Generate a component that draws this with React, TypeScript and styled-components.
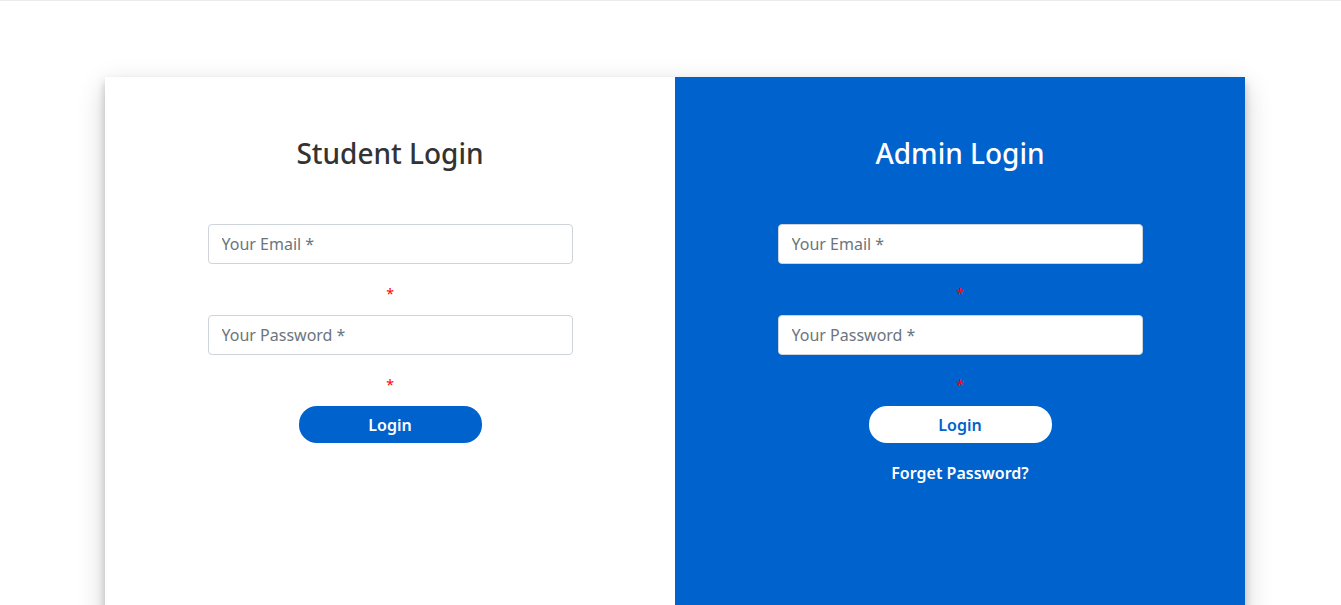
import React from "react";
import styled, { createGlobalStyle } from "styled-components";

const Global = createGlobalStyle`
  html, body { margin: 0; padding: 0; overflow: hidden; background: #fff; }
  body { font-family: "Noto Sans", "Open Sans", Arial, sans-serif; color: #212529; }
  * { box-sizing: border-box; }
`;

const TopRule = styled.div`
  height: 1px;
  background: #dcdcdc;
  border-bottom: 1px solid #ececec;
`;

const Page = styled.div`
  display: flex;
  justify-content: center;
  padding-left: 9px;
  padding-top: 76px;
`;

const Card = styled.div`
  width: 1140px;
  display: grid;
  grid-template-columns: 1fr 1fr;
  box-shadow: 0 5px 8px 0 rgba(0, 0, 0, 0.2), 0 9px 26px 0 rgba(0, 0, 0, 0.19);
`;

const Panel = styled.div<{ $dark?: boolean }>`
  background: ${(p) => (p.$dark ? "#0062cc" : "#fff")};
  min-height: 560px;
  display: flex;
  flex-direction: column;
  align-items: center;
  padding-top: 59px;
`;

const Title = styled.h3<{ $dark?: boolean }>`
  margin: 0 0 54px;
  font-size: 28px;
  line-height: 34px;
  font-weight: 500;
  color: ${(p) => (p.$dark ? "#fff" : "#333")};
`;

const Form = styled.form`
  width: 365px;
  display: flex;
  flex-direction: column;
  align-items: center;
`;

const Input = styled.input`
  width: 100%;
  height: 40px;
  padding: 0 13px;
  font-family: inherit;
  font-size: 16px;
  color: #495057;
  background: #fff;
  border: 1px solid #ced4da;
  border-radius: 4px;
  outline: none;
  &::placeholder { color: #6c757d; opacity: 1; }
`;

const Required = styled.span`
  height: 51px;
  padding-top: 8px;
  display: flex;
  align-items: center;
  justify-content: center;
  color: #ff0000;
  font-size: 14px;
  line-height: 1;
`;

const Submit = styled.button<{ $dark?: boolean }>`
  width: 183px;
  height: 37px;
  border: none;
  border-radius: 18px;
  font-family: inherit;
  font-size: 16px;
  font-weight: 600;
  cursor: pointer;
  color: ${(p) => (p.$dark ? "#0062cc" : "#fff")};
  background: ${(p) => (p.$dark ? "#fff" : "#0062cc")};
`;

const ForgetLink = styled.a`
  margin-top: 18px;
  color: #fff;
  font-size: 16px;
  line-height: 24px;
  font-weight: 600;
  text-decoration: none;
`;

function LoginForm({ dark, title }: { dark?: boolean; title: string }) {
  return (
    <Panel $dark={dark}>
      <Title $dark={dark}>{title}</Title>
      <Form onSubmit={(e) => e.preventDefault()}>
        <Input type="text" placeholder="Your Email *" />
        <Required>*</Required>
        <Input type="password" placeholder="Your Password *" />
        <Required>*</Required>
        <Submit $dark={dark} type="submit">Login</Submit>
        {dark && <ForgetLink href="#">Forget Password?</ForgetLink>}
      </Form>
    </Panel>
  );
}

export default function App() {
  return (
    <>
      <Global />
      <TopRule />
      <Page>
        <Card>
          <LoginForm title="Student Login" />
          <LoginForm dark title="Admin Login" />
        </Card>
      </Page>
    </>
  );
}
